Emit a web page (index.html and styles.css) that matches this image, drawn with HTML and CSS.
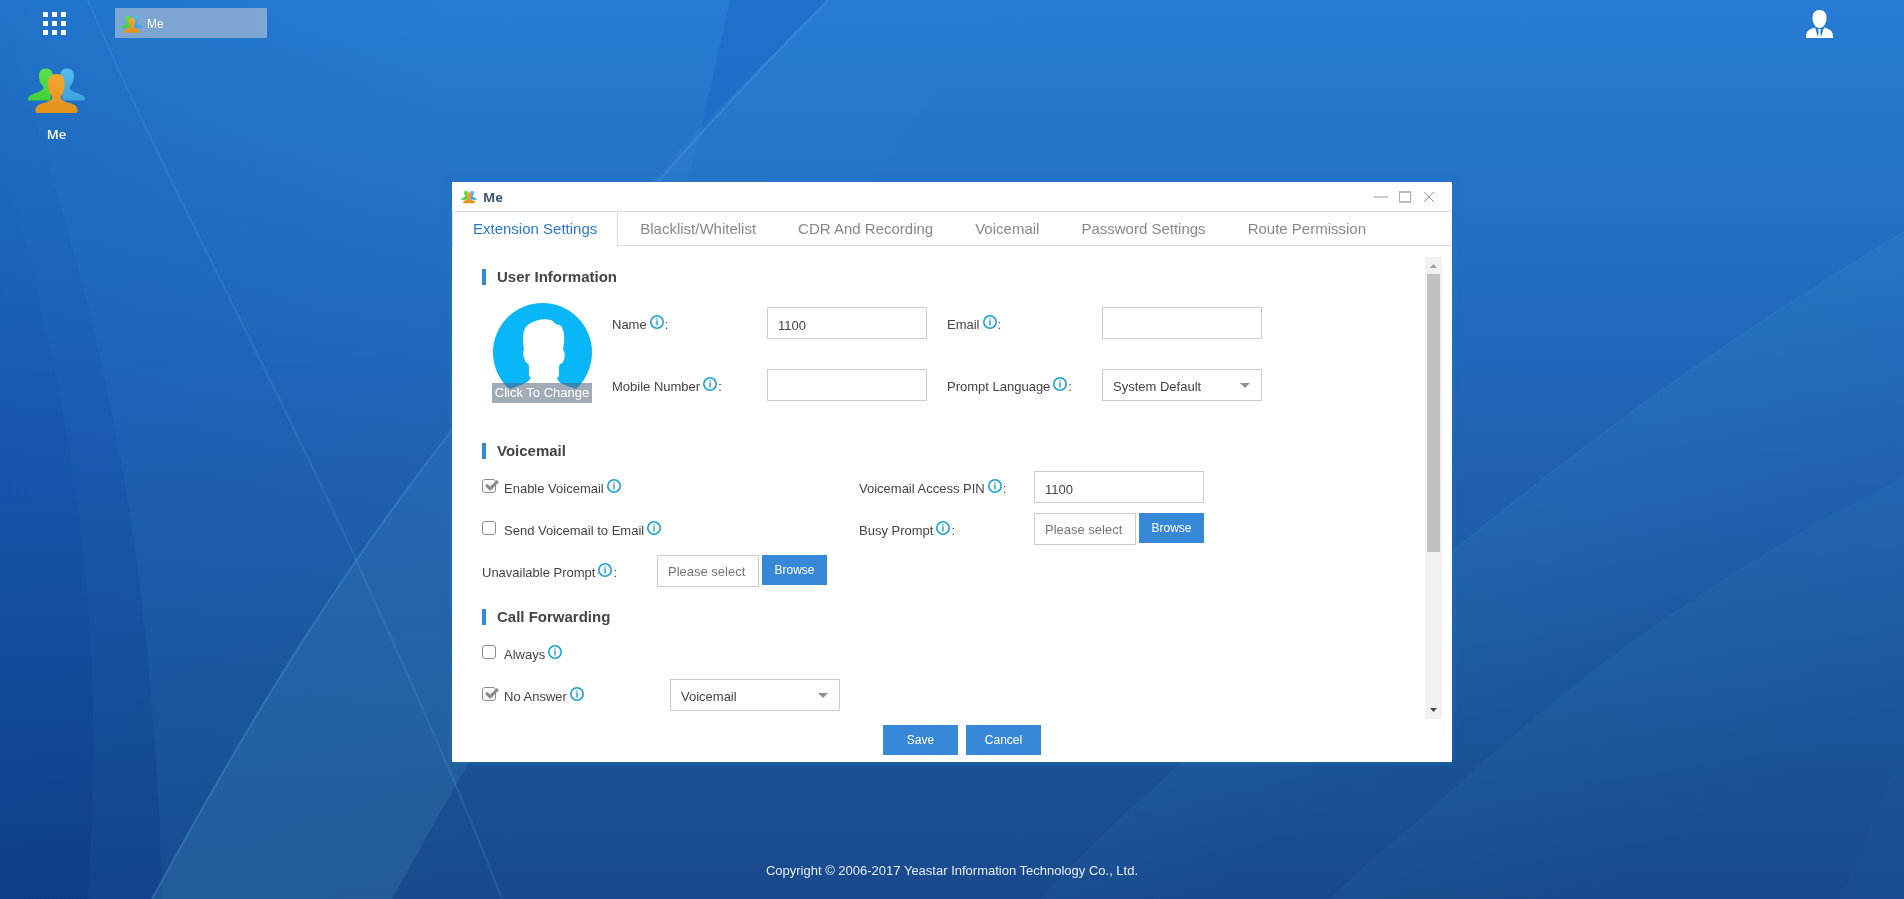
FILE: index.html
```html
<!DOCTYPE html>
<html lang="en">
<head>
<meta charset="utf-8">
<title>Me</title>
<link rel="stylesheet" href="styles.css">
</head>
<body>
<svg class="defs" aria-hidden="true">
  <defs>
    <linearGradient id="g-green" x1="0" y1="0" x2="0" y2="1"><stop offset="0" stop-color="#5be052"/><stop offset="1" stop-color="#41d236"/></linearGradient>
    <linearGradient id="g-blue" x1="0" y1="0" x2="0" y2="1"><stop offset="0" stop-color="#55bdf3"/><stop offset="1" stop-color="#3da3da"/></linearGradient>
    <linearGradient id="g-orange" x1="0" y1="0" x2="0" y2="1"><stop offset="0" stop-color="#f8a733"/><stop offset="1" stop-color="#df9118"/></linearGradient>
    <symbol id="people" viewBox="0 0 57 45">
      <path fill="url(#g-green)" d="M18 .5c5 0 6.700 3 6.700 7v12L22 32.500H1.500Q0 32.500 0 31c0-3 4-4.500 8-6s8-3 7.500-6C12 15 11 12 11 8c0-4.500 2-7.500 7-7.500z"/>
      <path fill="url(#g-blue)" d="M39 .5c-5 0-6.700 3-6.700 7v12L35 32.500h20.500q1.500 0 1.500-1.500c0-3-4-4.500-8-6s-8-3-7.500-6C45 15 46 12 46 8c0-4.500-2-7.500-7-7.500z"/>
      <path fill="url(#g-orange)" d="M28.500 6c6 0 8.300 4 8.300 10 0 5-1.300 9-3.800 12-1 3.500 2 5 6.500 6.500C45 36 49 37 49.500 41.500V43q0 2-1.500 2H9q-1.500 0-1.500-2v-1.500C8 37 12 36 17.500 34.500 22 33 25 31.500 24 28c-2.500-3-4-7-4-12 0-6 2.500-10 8.500-10z"/>
    </symbol>
    <symbol id="info" viewBox="0 0 14 14">
      <circle cx="7" cy="7" r="6.200" fill="none" stroke="#1ba1d3" stroke-width="1.600"/>
      <path fill="#1ba1d3" d="M6.300 3.200h1.400v1.400H6.300zM6.300 5.300h1.400v5.200H6.300z"/>
    </symbol>
    <symbol id="caret" viewBox="0 0 10 5"><path fill="#8f8f8f" d="M0 0h10L5 5z"/></symbol>
  </defs>
</svg>

<svg class="wallpaper" viewBox="0 0 1904 899" preserveAspectRatio="none" aria-hidden="true">
  <defs>
    <linearGradient id="w-base" x1="0" y1="0" x2="0" y2="1">
      <stop offset="0" stop-color="#267cd3"/><stop offset=".2" stop-color="#2473c7"/><stop offset=".5" stop-color="#2062b2"/><stop offset=".8" stop-color="#1b5599"/><stop offset="1" stop-color="#19498c"/>
    </linearGradient>
    <linearGradient id="w-side" x1="0" y1="0" x2="1" y2="0">
      <stop offset="0" stop-color="#0f56ae" stop-opacity=".24"/><stop offset=".24" stop-color="#0f56ae" stop-opacity="0"/>
    </linearGradient>
    <linearGradient id="w-dark" x1="0" y1="0" x2="0" y2="1">
      <stop offset="0" stop-color="#0a46a0" stop-opacity="0"/><stop offset=".35" stop-color="#0a46a8" stop-opacity=".13"/><stop offset="1" stop-color="#062a78" stop-opacity=".26"/>
    </linearGradient>
    <linearGradient id="w-beam" x1="0" y1="0" x2="0" y2="1">
      <stop offset="0" stop-color="#3d90d8" stop-opacity="0"/><stop offset=".5" stop-color="#3d90c8" stop-opacity=".16"/><stop offset="1" stop-color="#4090b8" stop-opacity=".25"/>
    </linearGradient>
    <linearGradient id="w-ray" gradientUnits="userSpaceOnUse" x1="1600" y1="430" x2="1700" y2="600">
      <stop offset="0" stop-color="#2f86c0" stop-opacity=".2"/><stop offset="1" stop-color="#2f86c0" stop-opacity="0"/>
    </linearGradient>
    <linearGradient id="w-ray2" gradientUnits="userSpaceOnUse" x1="1600" y1="660" x2="1700" y2="830">
      <stop offset="0" stop-color="#2f86b8" stop-opacity=".13"/><stop offset="1" stop-color="#2f86b8" stop-opacity="0"/>
    </linearGradient>
  </defs>
  <path fill="url(#w-base)" d="M0 0h1904v899H0z"/>
  <path fill="url(#w-side)" d="M0 0h1904v899H0z"/>
  <path fill="url(#w-dark)" d="M0 0C60 220 150 420 162 899H0z"/>
  <path fill="url(#w-dark)" d="M0 140C60 380 110 560 88 899H0z"/>
  <path fill="url(#w-beam)" d="M828 0C700 130 620 220 452 430 350 560 260 700 152 899h240q50-90 90-160L1000 0z"/>
  <path fill="#1a66c8" fill-opacity=".5" d="M730 0h98Q760 66 702 126z"/>
  <path fill="#4fa0e0" fill-opacity=".1" d="M702 126l-52 56h37z"/>
  <path fill="url(#w-ray)" d="M1904 232C1740 330 1600 430 1454 550 1300 660 1150 780 1040 899h864z"/>
  <path fill="url(#w-ray2)" d="M1904 477C1700 580 1560 690 1452 790 1420 820 1380 850 1330 899h574z"/>
  <path fill="#2f70b8" fill-opacity=".07" d="M1904 745q-30 70-64 154h64z"/>
  <g fill="none" stroke="#5ea2e2">
    <path stroke-opacity=".2" stroke-width="2" d="M88 0C160 170 270 370 357 562 410 680 460 790 502 899"/>
    <path stroke-opacity=".3" stroke-width="2" d="M828 0C700 130 620 220 452 430 350 560 260 700 152 899"/>
    <path stroke-opacity=".08" stroke-width="2" d="M1904 232C1740 330 1600 430 1454 550"/>
  </g>
</svg>

<header class="topbar">
  <button class="icon-button" type="button" aria-label="Main menu">
    <svg width="24" height="24" viewBox="0 0 24 24" fill="#fff"><path d="M0 0h5v5H0zM9 0h5v5H9zM18 0h5v5h-5zM0 9h5v5H0zM9 9h5v5H9zM18 9h5v5h-5zM0 18h5v5H0zM9 18h5v5H9zM18 18h5v5h-5z"/></svg>
  </button>
  <button class="task" type="button"><svg class="task-icon"><use href="#people"/></svg>Me</button>
  <button class="icon-button user" type="button" aria-label="Account">
    <svg width="27" height="28" viewBox="0 0 27 28" fill="#fff"><path d="M13.500 0C18 0 20.500 3 20.500 8s-3 10-7 10-7-5-7-10S9 0 13.500 0z"/><path d="M9 17.500l3 9.500.800-5.500-1-1.500 1.700-1.500 1.700 1.500-1 1.500.8 5.500 3-9.500c4 1.500 9 2 9 9.500v1H0v-1c0-7.500 5-8 9-9.500z"/></svg>
  </button>
</header>

<a class="shortcut" href="#me"><svg class="shortcut-icon"><use href="#people"/></svg><span>Me</span></a>

<main class="desktop">
  <section class="window" id="me" aria-label="Me">
    <div class="titlebar">
      <svg class="title-icon"><use href="#people"/></svg>
      <h1 class="title">Me</h1>
      <div class="controls">
        <button type="button" aria-label="Minimize"><svg width="14" height="14"><path d="M0 7h14" stroke="#ccc" stroke-width="2"/></svg></button>
        <button type="button" aria-label="Maximize"><svg width="14" height="14"><path d="M1.500 1.500h11v11h-11z" fill="none" stroke="#aaa"/><path d="M1 2h12M1 12h12" stroke="#bbb" stroke-width="2"/></svg></button>
        <button type="button" aria-label="Close"><svg width="14" height="14"><path d="M2 2l10 10M12 2L2 12" stroke="#999"/></svg></button>
      </div>
    </div>
    <nav class="tabs">
      <a class="tab active" href="#ext">Extension Settings</a>
      <a class="tab" href="#list">Blacklist/Whitelist</a>
      <a class="tab" href="#cdr">CDR And Recording</a>
      <a class="tab" href="#vm">Voicemail</a>
      <a class="tab" href="#pwd">Password Settings</a>
      <a class="tab" href="#route">Route Permission</a>
    </nav>
    <form class="form">
      <div class="pane">
        <div class="fields">
          <h2 class="heading">User Information</h2>
          <div class="profile">
            <button class="avatar" type="button">
              <svg viewBox="0 0 100 101"><circle cx="50.500" cy="50.500" r="49.500" fill="#09b6f8"/><path fill="#fff" d="M32 48c-2-14-1-22 5-26 8-5 18-6 24-3 2 3 4 4 7 4 5 5 5 14 3 25 3 2 2 12-2 14-2 0-2 1-2 12l-2 2c1 4 5 6 8 7l27 10v8H2v-8l27-10c3-1 7-3 10-7l-2-2c0-11 0-12-1-12-4-2-6-12-4-14z"/></svg>
              <span class="avatar-text">Click To Change</span>
            </button>
            <div class="profile-grid">
              <label class="label" for="name"><span>Name</span><svg class="info"><use href="#info"/></svg><span>:</span></label>
              <input class="input" id="name" type="text" value="1100">
              <label class="label" for="email"><span>Email</span><svg class="info"><use href="#info"/></svg><span>:</span></label>
              <input class="input" id="email" type="text">
              <label class="label" for="mobile"><span>Mobile Number</span><svg class="info"><use href="#info"/></svg><span>:</span></label>
              <input class="input" id="mobile" type="text">
              <label class="label" for="lang"><span>Prompt Language</span><svg class="info"><use href="#info"/></svg><span>:</span></label>
              <div class="select"><select class="input" id="lang"><option>System Default</option></select><svg class="caret"><use href="#caret"/></svg></div>
            </div>
          </div>

          <h2 class="heading">Voicemail</h2>
          <div class="rows">
            <div class="cell"><label class="label check"><input type="checkbox" checked><span>Enable Voicemail</span><svg class="info"><use href="#info"/></svg></label></div>
            <div class="cell"><label class="label" for="pin"><span>Voicemail Access PIN</span><svg class="info"><use href="#info"/></svg><span>:</span></label><input class="input" id="pin" type="text" value="1100"></div>
            <div class="cell"><label class="label check"><input type="checkbox"><span>Send Voicemail to Email</span><svg class="info"><use href="#info"/></svg></label></div>
            <div class="cell"><label class="label" for="busy"><span>Busy Prompt</span><svg class="info"><use href="#info"/></svg><span>:</span></label><div class="file"><input class="input" id="busy" type="text" placeholder="Please select"><button class="button" type="button">Browse</button></div></div>
            <div class="cell"><label class="label" for="unavail"><span>Unavailable Prompt</span><svg class="info"><use href="#info"/></svg><span>:</span></label><div class="file"><input class="input" id="unavail" type="text" placeholder="Please select"><button class="button" type="button">Browse</button></div></div>
          </div>

          <h2 class="heading forwarding">Call Forwarding</h2>
          <div class="rows">
            <div class="cell wide"><label class="label check"><input type="checkbox"><span>Always</span><svg class="info"><use href="#info"/></svg></label></div>
            <div class="cell wide"><label class="label check"><input type="checkbox" checked><span>No Answer</span><svg class="info"><use href="#info"/></svg></label><div class="select"><select class="input" aria-label="No Answer destination"><option>Voicemail</option></select><svg class="caret"><use href="#caret"/></svg></div></div>
          </div>
        </div>
        <div class="scrollbar" aria-hidden="true">
          <svg width="17" height="17"><path d="M5 11h7L8.500 7z" fill="#a0a0a0"/></svg>
          <div class="track"><div class="thumb"></div></div>
          <svg width="17" height="17"><path d="M5 6h7l-3.500 4z" fill="#484848"/></svg>
        </div>
      </div>
      <div class="actions"><button class="button" type="button">Save</button><button class="button" type="button">Cancel</button></div>
    </form>
  </section>
</main>

<footer class="copyright">Copyright © 2006-2017 Yeastar Information Technology Co., Ltd.</footer>
</body>
</html>
```
FILE: styles.css
```css
* { box-sizing: border-box; }

body {
  margin: 0;
  min-height: 100vh;
  display: flex;
  flex-direction: column;
  background: #1f62b2;
  color: #444;
  font: 13px/16px "Liberation Sans", Arial, sans-serif;
}

button, input, select { font: inherit; color: inherit; }
button { border: 0; padding: 0; background: none; cursor: pointer; }
a { text-decoration: none; }
svg { display: block; flex: none; }

.defs { position: absolute; width: 0; height: 0; }
.wallpaper { position: fixed; inset: 0; width: 100%; height: 100%; z-index: -1; }

/* Top bar */
.topbar {
  display: flex;
  align-items: center;
  height: 46px;
  padding: 0 71px 0 43px;
}
.topbar .user { margin-left: auto; }
.icon-button { padding-top: 1px; }
.task {
  display: flex;
  align-items: center;
  gap: 4px;
  width: 152px;
  height: 30px;
  margin-left: 48px;
  padding: 1px 6px 0;
  background: rgba(216, 216, 216, .5);
  color: #fff;
  font-size: 12px;
}
.task-icon { width: 22px; height: 18px; }

.shortcut {
  position: absolute;
  top: 68px;
  left: 28px;
  display: flex;
  flex-direction: column;
  align-items: center;
  gap: 12px;
  color: #fff;
  font: 600 13px/18px "Open Sans", sans-serif;
}
.shortcut-icon { width: 57px; height: 45px; }

/* Window */
.desktop {
  flex: 1;
  display: flex;
  align-items: center;
  justify-content: center;
  padding-top: 56px;
}
.window {
  width: 1000px;
  max-width: 100%;
  background: #fff;
  box-shadow: 0 0 6px rgba(30, 130, 200, .6);
}
.titlebar {
  display: flex;
  align-items: center;
  height: 30px;
  padding: 0 16px 0 9px;
  border-bottom: 1px solid #ddd;
}
.title-icon { width: 16px; height: 14px; }
.title {
  margin: 0 auto 0 6px;
  color: #3f5673;
  font: 700 13px/18px "Open Sans", sans-serif;
}
.controls { display: flex; gap: 10px; }

.tabs {
  display: flex;
  gap: 2px;
  height: 34px;
  border-bottom: 1px solid #ddd;
}
.tab {
  height: 34px;
  padding: 0 20px;
  color: #888;
  font-size: 15px;
  line-height: 34px;
}
.tab.active {
  border: solid #ddd;
  border-width: 0 1px;
  background: #fff;
  color: #2977cc;
}

/* Form */
.form { padding: 11px 10px 7px; }
.pane { display: flex; }
.fields { flex: 1; padding: 12px 0 8px 20px; }

.heading {
  margin: 0;
  padding-left: 11px;
  border-left: 4px solid #3888d8;
  font-size: 15px;
  line-height: 16px;
}
.profile {
  display: flex;
  align-items: flex-start;
  gap: 20px;
  padding: 17px 10px 40px;
}
.avatar { position: relative; width: 100px; }
.avatar-text {
  position: absolute;
  inset: auto 0 0;
  background: rgba(85, 100, 125, .55);
  color: #fff;
  line-height: 20px;
  white-space: nowrap;
}
.profile-grid {
  display: grid;
  grid-template-columns: 135px 160px 135px 160px;
  gap: 30px 20px;
  padding-top: 5px;
}

.label { display: flex; align-items: center; height: 30px; white-space: nowrap; }
.label span { padding-top: 6px; }
.info { width: 14px; height: 14px; margin-left: 3px; }
.info + span { padding-left: 1px; }

.input {
  width: 100%;
  height: 32px;
  padding: 4px 10px 0;
  border: 1px solid #ccc;
  border-radius: 0;
  background: #fff;
  appearance: none;
  outline: 0;
}
.input::placeholder { color: #777; opacity: 1; }
.select { position: relative; width: 100%; }
.caret {
  position: absolute;
  top: 14px;
  right: 12px;
  width: 10px;
  height: 5px;
  pointer-events: none;
}

.rows {
  display: grid;
  grid-template-columns: 377px 345px;
  gap: 10px 0;
  padding-top: 12px;
}
.cell { display: flex; height: 32px; }
.cell > .label { flex: none; width: 175px; }
.cell > .input, .cell > .select { width: 170px; }
.wide { grid-column: 1 / -1; }
.wide > .label { width: 188px; }
.forwarding { margin-top: 22px; }

.check input {
  position: relative;
  appearance: none;
  flex: none;
  width: 14px;
  height: 14px;
  margin: 0 8px 0 0;
  border: 1px solid #8c8c8c;
  border-radius: 3px;
  background: #fff;
}
.check input:checked::after {
  content: "";
  position: absolute;
  top: 0;
  left: 2px;
  width: 14px;
  height: 11px;
  background: #8c8c8c;
  clip-path: polygon(0 55%, 15% 35%, 37% 60%, 84% 0, 100% 18%, 38% 100%);
}

.file { display: flex; gap: 3px; width: 170px; }
.file .input { width: 102px; padding-top: 1px; }

.button {
  width: 75px;
  height: 30px;
  background: #3888d8;
  color: #fff;
  font-size: 12px;
}
.file .button { width: 65px; }
.actions {
  display: flex;
  justify-content: center;
  gap: 8px;
  padding: 6px 0 0 20px;
}

.scrollbar { display: flex; flex-direction: column; width: 17px; background: #f1f1f1; }
.track { flex: 1; padding: 0 2px; }
.thumb { height: 65%; background: #c1c1c1; }

.copyright {
  height: 57px;
  padding-top: 21px;
  color: #e4edf7;
  text-align: center;
}
```
